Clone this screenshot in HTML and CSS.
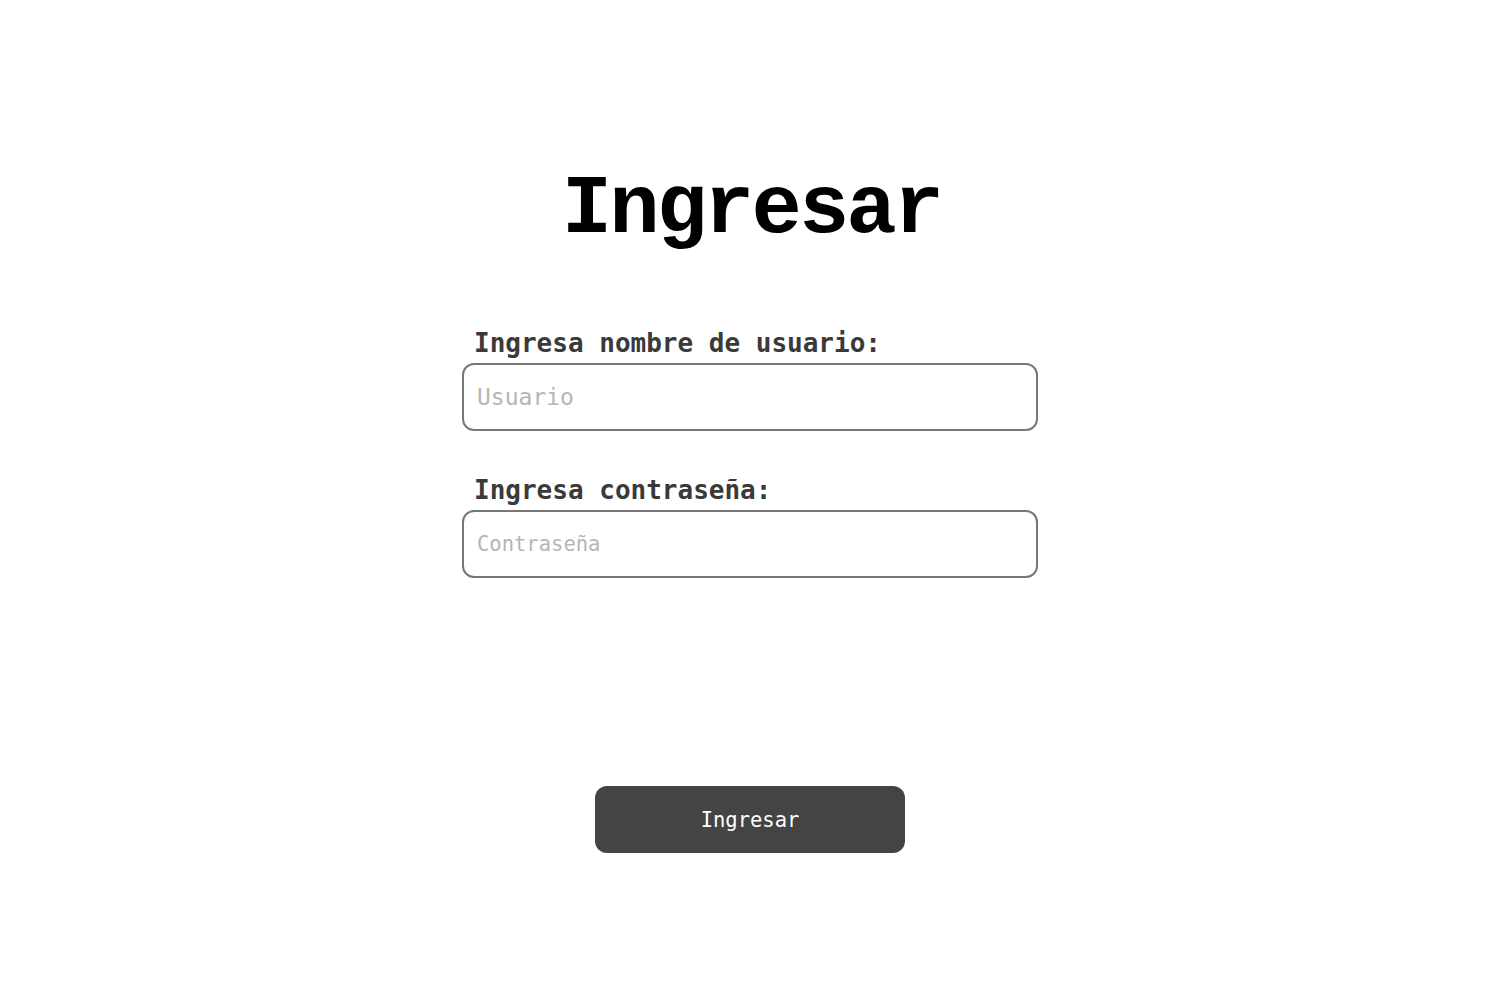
FILE: index.html
```html
<!DOCTYPE html>
<html lang="es">
<head>
<meta charset="utf-8">
<title>Ingresar</title>
<link rel="stylesheet" href="styles.css">
</head>
<body>
<main class="page">
  <h1 class="title">Ingresar</h1>
  <form class="form">
    <div class="field">
      <label class="label" for="user">Ingresa nombre de usuario:</label>
      <input class="input input-user" id="user" type="text" placeholder="Usuario">
    </div>
    <div class="field">
      <label class="label" for="pass">Ingresa contraseña:</label>
      <input class="input input-pass" id="pass" type="password" placeholder="Contraseña">
    </div>
    <button class="button" type="button">Ingresar</button>
  </form>
</main>
</body>
</html>
```

FILE: styles.css
```css
html, body {
  margin: 0;
  padding: 0;
  background: #ffffff;
}

.page {
  display: flex;
  flex-direction: column;
  align-items: center;
  padding-top: 160px;
}

.title {
  margin: 0;
  font-family: "Liberation Mono", "Courier New", monospace;
  font-weight: bold;
  font-size: 84px;
  letter-spacing: -3px;
  text-indent: 3px;
  line-height: 100px;
  color: #000;
}

.form {
  width: 576px;
  display: flex;
  flex-direction: column;
  align-items: center;
  margin-top: 67px;
}

.field {
  width: 100%;
  display: flex;
  flex-direction: column;
  margin-bottom: 43px;
}

.label {
  font-family: "DejaVu Sans Mono", monospace;
  font-weight: bold;
  font-size: 26px;
  line-height: 32px;
  color: #3a3a3a;
  padding-left: 12px;
  margin-bottom: 4px;
}

.input {
  box-sizing: border-box;
  width: 100%;
  height: 68px;
  border: 2px solid #777;
  border-radius: 12px;
  padding: 0 13px;
  font-family: "DejaVu Sans Mono", monospace;
  color: #222;
  outline: none;
  background: #fff;
}

.input-user { font-size: 23px; }
.input-pass { font-size: 20.5px; }

.input::placeholder {
  color: #b5b5b5;
}

.button {
  margin-top: 165px;
  width: 310px;
  height: 67px;
  border: none;
  border-radius: 12px;
  background: #444;
  color: #fff;
  font-family: "DejaVu Sans Mono", monospace;
  font-size: 20.5px;
}
```
